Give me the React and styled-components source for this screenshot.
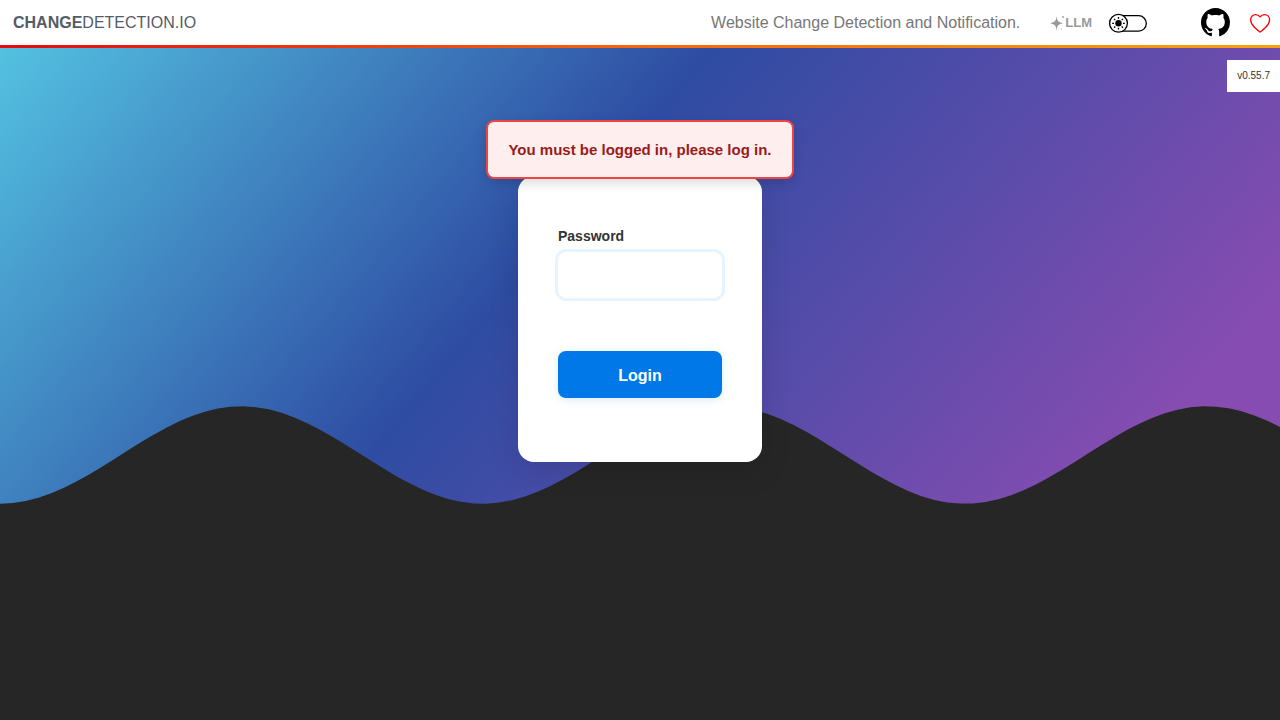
import React, { useState } from "react";
import styled, { createGlobalStyle } from "styled-components";

// Lower edge of the coloured backdrop: one cosine sample per percent of width
const wave = Array.from({ length: 101 }, (_, x) => {
  const y = 70 + 7.5 * Math.cos(x / 6);
  return `${x}% ${y.toFixed(2)}%`;
}).join(", ");

const SparkleIcon = () => (
  <svg width="16" height="16" viewBox="0 0 16 16" fill="currentColor">
    <path d="M7.600 1C8 5.500 9 7.200 14 8.300 9 9.400 8 11 7.600 15.700 7.200 11 6 9.400 1.200 8.300 6 7.200 7.200 5.500 7.600 1Z" />
    <circle cx="14" cy="2" r="0.9" />
    <circle cx="12.500" cy="14" r="0.6" />
  </svg>
);

const ToggleIcon = () => (
  <svg width="39" height="21" viewBox="0 0 39 21" fill="none" stroke="#000">
    <rect x="2" y="3.700" width="36.300" height="15.400" rx="7.700" strokeWidth="1.300" />
    <circle cx="10.500" cy="11.300" r="8.900" fill="#fff" strokeWidth="1.300" />
    <circle cx="10.500" cy="11.300" r="3.200" fill="#000" stroke="none" />
    <path
      d="M10.500 5v1.800M10.500 15.800v1.800M4.200 11.300H6M15 11.300h1.800M6.100 6.900l1.200 1.200M13.700 14.500l1.200 1.200M6.100 15.700l1.200-1.200M13.700 8.100l1.200-1.200"
      strokeWidth="1.300"
    />
  </svg>
);

const GithubIcon = () => (
  <svg width="29" height="29" viewBox="0 0 16 16" fill="#000">
    <path d="M8 0C3.58 0 0 3.58 0 8c0 3.54 2.29 6.53 5.47 7.59.4.07.55-.17.55-.38 0-.19-.01-.82-.01-1.49-2.01.37-2.53-.49-2.69-.94-.09-.23-.48-.94-.82-1.13-.28-.15-.68-.52-.01-.53.63-.01 1.08.58 1.23.82.72 1.21 1.87.87 2.33.66.07-.52.28-.87.51-1.07-1.78-.2-3.64-.89-3.64-3.95 0-.87.31-1.59.82-2.15-.08-.2-.36-1.02.08-2.12 0 0 .67-.21 2.2.82.64-.18 1.32-.27 2-.27s1.36.09 2 .27c1.53-1.04 2.2-.82 2.2-.82.44 1.1.16 1.92.08 2.12.51.56.82 1.27.82 2.15 0 3.07-1.87 3.75-3.65 3.95.29.25.54.73.54 1.48 0 1.07-.01 1.93-.01 2.2 0 .21.15.46.55.38A8.01 8.01 0 0 0 16 8c0-4.42-3.58-8-8-8Z" />
  </svg>
);

const HeartIcon = () => (
  <svg width="22" height="23" viewBox="0 0 22 23" fill="none">
    <path
      d="M11.100 5.900C9.800 4.300 8.300 3.600 6.700 3.600 3.900 3.600 1.600 5.700 1.600 8.800 1.600 11.400 3 13.700 5.200 16 7.100 18 9.200 19.600 11.100 21.100 13 19.600 15.100 18 17 16 19.200 13.700 20.600 11.400 20.600 8.800 20.600 5.700 18.300 3.600 15.500 3.600 13.900 3.600 12.400 4.300 11.100 5.900Z"
      stroke="#ff0000"
      strokeWidth="1.300"
      strokeLinejoin="round"
    />
  </svg>
);

const App = () => {
  const [password, setPassword] = useState("");

  return (
    <>
      <GlobalStyle />
      <Page>
        <Backdrop />
        <Content>
          <Header>
            <Brand href="#">
              <strong>CHANGE</strong>DETECTION.IO
            </Brand>
            <Tagline>Website Change Detection and Notification.</Tagline>
            <Tools>
              <LlmButton type="button">
                <SparkleIcon />
                LLM
              </LlmButton>
              <IconButton type="button" aria-label="Toggle light mode">
                <ToggleIcon />
              </IconButton>
            </Tools>
            <Links>
              <IconLink href="#" aria-label="GitHub">
                <GithubIcon />
              </IconLink>
              <IconLink href="#" aria-label="Support">
                <HeartIcon />
              </IconLink>
            </Links>
          </Header>
          <HeaderLine />
          <Version>v0.55.7</Version>
          <Main>
            <Message role="alert">You must be logged in, please log in.</Message>
            <LoginForm onSubmit={(e) => e.preventDefault()}>
              <Label htmlFor="password">Password</Label>
              <PasswordInput
                id="password"
                type="password"
                value={password}
                onChange={(e) => setPassword(e.target.value)}
              />
              <LoginButton type="submit">Login</LoginButton>
            </LoginForm>
          </Main>
        </Content>
      </Page>
    </>
  );
};

export default App;

const GlobalStyle = createGlobalStyle`
  * {
    box-sizing: border-box;
  }

  body {
    margin: 0;
    background: #262626;
    font-family: "Helvetica Neue", "Liberation Sans", Arial, sans-serif;
    font-size: 16px;
    color: #333;
  }

  button,
  input {
    font-family: inherit;
  }

  svg {
    display: block;
  }
`;

const Page = styled.div`
  display: grid;
  grid-template-columns: minmax(0, 1fr);
  align-items: start;
  min-height: 100vh;
`;

const Backdrop = styled.div`
  grid-area: 1 / 1;
  height: 650px;
  background: linear-gradient(
    130deg,
    #5ad8f7,
    #2f50af 41.07%,
    #9150bf 84.05%
  );
  opacity: 0.91;
  clip-path: polygon(${wave}, 100% 0, 0 0);
`;

const Content = styled.div`
  grid-area: 1 / 1;
  z-index: 1;
  display: flex;
  flex-direction: column;
`;

const Header = styled.header`
  display: flex;
  align-items: center;
  height: 45px;
  padding: 0 9px 0 13px;
  background: #fff;
`;

const HeaderLine = styled.div`
  height: 3px;
  background: linear-gradient(to right, #e60a0f, #f8660a 50%, #f5a30f);
`;

const Brand = styled.a`
  color: #535c66;
  text-decoration: none;
`;

const Tagline = styled.span`
  margin-left: auto;
  color: #777;
`;

const Tools = styled.div`
  display: flex;
  align-items: center;
  gap: 16px;
  margin-left: 29px;
`;

const Links = styled.div`
  display: flex;
  align-items: center;
  gap: 19px;
  margin-left: 54px;
`;

const LlmButton = styled.button`
  display: flex;
  align-items: center;
  padding: 0;
  border: 0;
  background: none;
  color: #999;
  font-size: 13px;
  font-weight: 700;
`;

const IconButton = styled.button`
  padding: 0;
  border: 0;
  background: none;
  cursor: pointer;
`;

const IconLink = styled.a`
  display: block;
`;

const Version = styled.div`
  align-self: flex-end;
  margin-top: 12px;
  padding: 0 10px;
  background: #fff;
  font-size: 10px;
  line-height: 32px;
`;

const Main = styled.main`
  display: flex;
  flex-direction: column;
  align-items: center;
  margin-top: 28px;
`;

const Message = styled.div`
  z-index: 1;
  padding: 18px 20px;
  border: 2px solid #ef4444;
  border-radius: 8px;
  background: #feeeee;
  box-shadow: 0 4px 12px rgba(0, 0, 0, 0.15);
  color: #991b1b;
  font-size: 15px;
  font-weight: 700;
  line-height: 19px;
`;

const LoginForm = styled.form`
  display: flex;
  flex-direction: column;
  width: 244px;
  margin-top: -3px;
  padding: 50px 40px 64px;
  border-radius: 16px;
  background: #fff;
  box-shadow: 0 8px 32px rgba(0, 0, 0, 0.12);
`;

const Label = styled.label`
  color: #333;
  font-size: 14px;
  font-weight: 700;
  line-height: 20px;
`;

const PasswordInput = styled.input`
  height: 46px;
  margin-top: 6px;
  padding: 0 16px;
  border: 0;
  border-radius: 8px;
  outline: 0;
  background: #fff;
  box-shadow: 0 0 0 3px #e6f4ff;
  font-size: 16px;
`;

const LoginButton = styled.button`
  height: 47px;
  margin-top: 53px;
  padding: 2px 0 0;
  border: 0;
  border-radius: 8px;
  background: #0078e7;
  box-shadow: 0 2px 8px rgba(0, 120, 231, 0.15);
  color: #fff;
  font-size: 16px;
  font-weight: 700;
`;
